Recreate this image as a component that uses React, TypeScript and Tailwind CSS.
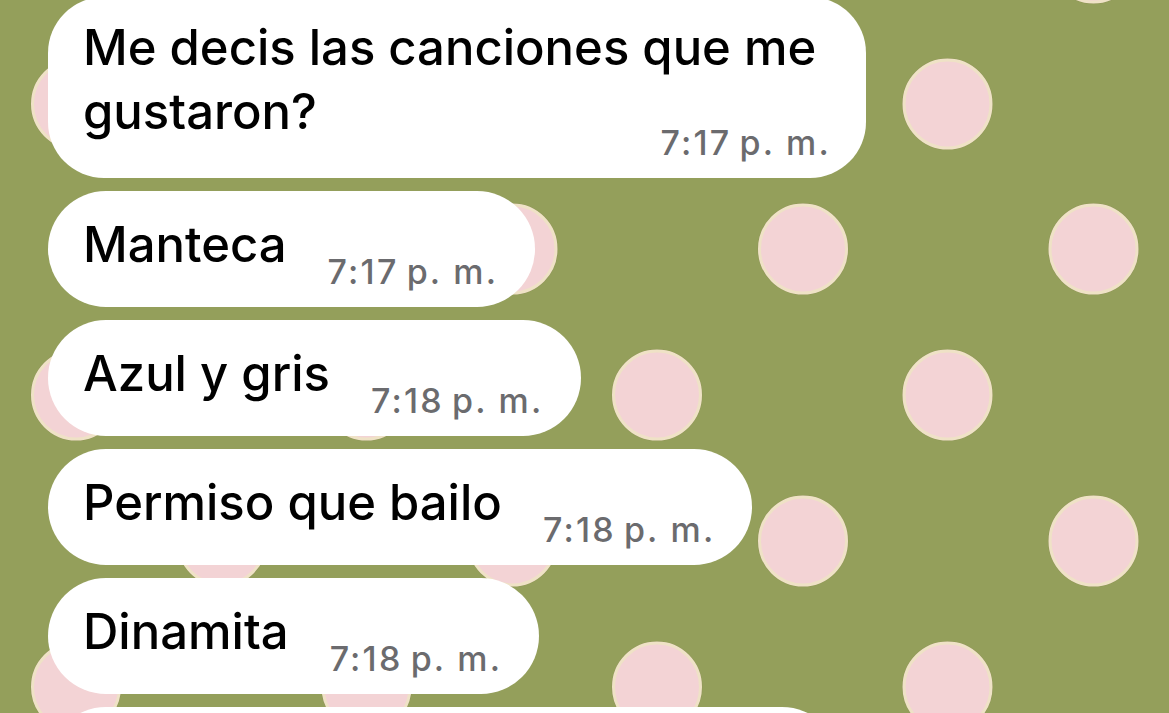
import React from 'react';

const NNBSP = '\u202F';

interface Message {
  text: string;
  time: string;
}

const messages: Message[] = [
  { text: 'Manteca', time: '7:17' },
  { text: 'Azul y gris', time: '7:18' },
  { text: 'Permiso que bailo', time: '7:18' },
  { text: 'Dinamita', time: '7:18' },
];

// polka dot wallpaper: two staggered rows
const rowY = [-42, 104, 249, 395, 541, 687, 833];
const dots: { x: number; y: number }[] = [];
rowY.forEach((y, i) => {
  const start = i % 2 === 0 ? 222 : 76;
  for (let j = 0; j < 5; j++) {
    dots.push({ x: start + j * 290.5, y });
  }
});

const Wallpaper: React.FC = () => (
  <svg className="absolute inset-0" width="1169" height="713" viewBox="0 0 1169 713">
    <rect width="1169" height="713" fill="#949f5b" />
    {dots.map((d, i) => (
      <g key={i}>
        <ellipse cx={d.x} cy={d.y} rx="45.5" ry="46" fill="#8c8c5a" opacity="0.55" />
        <ellipse cx={d.x} cy={d.y} rx="43.5" ry="44" fill="#f3d3d5" stroke="#efe2c6" strokeWidth="3" />
      </g>
    ))}
  </svg>
);

const Time: React.FC<{ time: string; className?: string }> = ({ time, className }) => (
  <span
    className={`text-[34px] leading-[40px] font-medium tracking-[2.2px] text-[#6b6b6e] whitespace-nowrap ${className ?? ''}`}
  >
    {time}
    {NNBSP}p. m.
  </span>
);

const Bubble: React.FC<Message> = ({ text, time }) => (
  <div className="flex items-end h-[116px] w-fit rounded-full bg-white pl-[35px] pr-[37px]">
    <span className="self-start mt-[24px] text-[49px] leading-[60px] font-medium text-black whitespace-nowrap">
      {text}
    </span>
    <Time time={time} className="ml-[41px] mb-[15px]" />
  </div>
);

export default function App() {
  return (
    <div
      className="relative w-[1169px] h-[713px] overflow-hidden"
      style={{ fontFamily: 'Inter, "Noto Sans", sans-serif' }}
    >
      <Wallpaper />
      <div className="relative flex flex-col gap-[13px] pl-[48px] -mt-[3px]">
        <div className="flex flex-col w-[818px] h-[181px] rounded-[56px] bg-white pl-[35px] pr-[35px] pt-[19px]">
          <span className="text-[49px] leading-[64px] font-medium text-black whitespace-nowrap">
            Me decis las canciones que me
          </span>
          <div className="flex justify-between items-start">
            <span className="text-[49px] leading-[64px] font-medium text-black">gustaron?</span>
            <Time time="7:17" className="mt-[43px]" />
          </div>
        </div>
        {messages.map((m, i) => (
          <Bubble key={i} {...m} />
        ))}
        <div className="w-[792px] h-[116px] rounded-full bg-white" />
      </div>
    </div>
  );
}
